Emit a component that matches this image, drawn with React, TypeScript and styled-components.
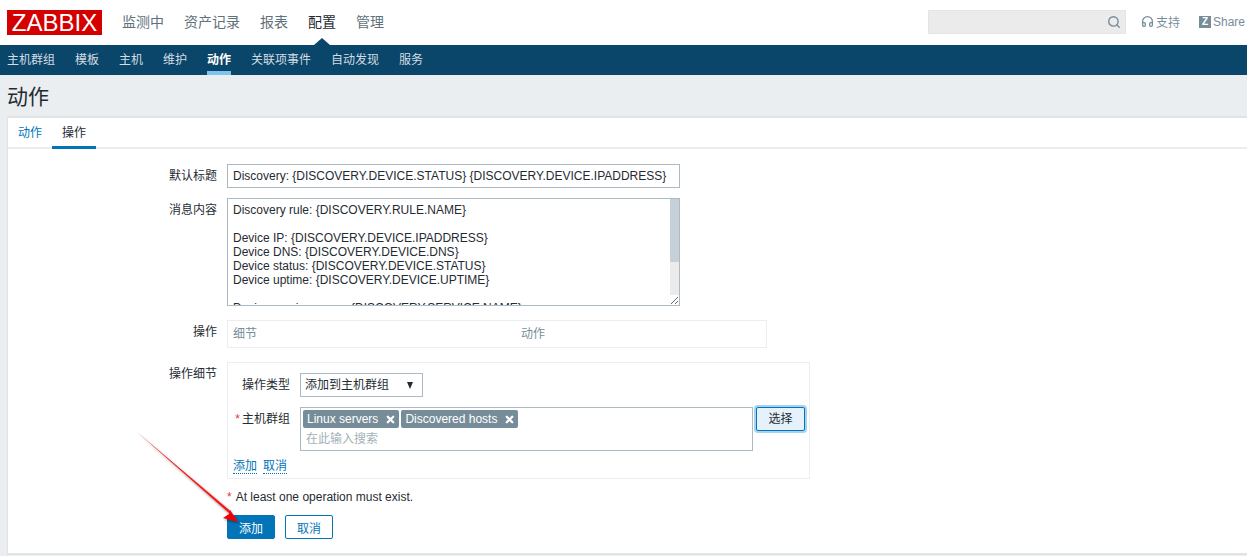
import { Headphones, Search, X } from 'lucide-react';
import styled, { createGlobalStyle } from 'styled-components';

const GlobalStyle = createGlobalStyle`
  html,
  body {
    margin: 0;
    height: 556px;
    overflow: hidden;
    background: #ebeef0;
    font-family: 'Liberation Sans', 'Noto Sans CJK SC', sans-serif;
    font-size: 12px;
    color: #1f2c33;
  }
`;

const Page = styled.div`
  position: relative;
  height: 556px;
`;

const TopBar = styled.header`
  display: flex;
  align-items: center;
  height: 45px;
  padding: 0 2px 0 7px;
  background: #fff;
  box-sizing: border-box;
`;

const Logo = styled.div`
  width: 95px;
  height: 25px;
  margin-right: 20px;
  background: #d40000;
  color: #fff;
  font-size: 24px;
  line-height: 25px;
  text-align: center;
`;

const TopMenu = styled.nav`
  display: flex;
  gap: 20px;
  flex: 1;
`;

const TopItem = styled.a<{ $active?: boolean }>`
  position: relative;
  font-size: 14px;
  line-height: 45px;
  color: ${(props) => (props.$active ? '#1f2c33' : '#5f717b')};

  ${(props) =>
    props.$active &&
    `
    &::after {
      content: '';
      position: absolute;
      left: 6px;
      bottom: 0;
      border-left: 8px solid transparent;
      border-right: 8px solid transparent;
      border-bottom: 7px solid #0a466a;
    }
  `}
`;

const RightTools = styled.div`
  display: flex;
  align-items: center;
  margin-bottom: 2px;
`;

const SearchBox = styled.div`
  display: flex;
  align-items: center;
  justify-content: flex-end;
  width: 198px;
  height: 24px;
  padding-right: 4px;
  margin-right: 15px;
  box-sizing: border-box;
  background: #ebebeb;
  border: 1px solid #e3e6e8;
  color: #768d99;
`;

const HelpLink = styled.a`
  display: flex;
  align-items: center;
  gap: 2px;
  color: #768d99;
  font-size: 12px;
`;

const ShareLink = styled(HelpLink)`
  margin-left: 19px;
`;

const ZMark = styled.span`
  width: 12px;
  height: 12px;
  background: #768d99;
  color: #fff;
  font-size: 10px;
  font-weight: bold;
  line-height: 12px;
  text-align: center;
`;

const SubNav = styled.nav`
  display: flex;
  gap: 20px;
  height: 30px;
  padding-left: 7px;
  background: #0a466a;
`;

const SubItem = styled.a<{ $active?: boolean }>`
  height: 30px;
  box-sizing: border-box;
  line-height: 30px;
  color: ${(props) => (props.$active ? '#fff' : '#d3dde2')};
  font-weight: ${(props) => (props.$active ? 'bold' : 'normal')};
  border-bottom: 4px solid ${(props) => (props.$active ? '#7cc3ef' : 'transparent')};
`;

const Title = styled.h1`
  margin: 0;
  height: 41px;
  padding-left: 7px;
  font-size: 21px;
  font-weight: normal;
  line-height: 44px;
  color: #1f2c33;
`;

const Card = styled.main`
  margin-left: 7px;
  height: 439px;
  box-sizing: border-box;
  background: #fff;
  border-top: 2px solid #dfe4e7;
  border-bottom: 2px solid #dfe4e7;
  border-left: 1px solid #dfe4e7;
`;

const Tabs = styled.div`
  display: flex;
  height: 29px;
  border-bottom: 2px solid #ebeef0;
`;

const Tab = styled.a<{ $active?: boolean }>`
  height: 31px;
  padding: 0 10px;
  box-sizing: border-box;
  line-height: 30px;
  color: ${(props) => (props.$active ? '#1f2c33' : '#0275b8')};
  border-bottom: 3px solid ${(props) => (props.$active ? '#0275b8' : 'transparent')};
`;

const Form = styled.form`
  display: flex;
  flex-direction: column;
  padding-top: 15px;
`;

const Row = styled.div<{ $gap: number }>`
  display: grid;
  grid-template-columns: 209px 1fr;
  column-gap: 10px;
  margin-bottom: ${(props) => props.$gap}px;
`;

const Label = styled.label`
  text-align: right;
  line-height: 24px;
  color: #1f2c33;
`;

const TextInput = styled.div`
  width: 453px;
  height: 24px;
  box-sizing: border-box;
  padding-left: 5px;
  border: 1px solid #acbbc3;
  line-height: 22px;
  white-space: nowrap;
`;

const MessageBox = styled.div`
  position: relative;
  width: 453px;
  height: 108px;
`;

const MessageArea = styled.textarea`
  display: block;
  width: 453px;
  height: 108px;
  box-sizing: border-box;
  padding: 4px 5px;
  border: 1px solid #acbbc3;
  border-radius: 0;
  outline: none;
  overflow: hidden;
  font: inherit;
  line-height: 14px;
  color: #1f2c33;
`;

/* headless chrome hides native scrollbars, so this one is drawn over the textarea */
const ScrollTrack = styled.div`
  position: absolute;
  top: 1px;
  right: 1px;
  bottom: 11px;
  width: 9px;
  background: #ebebeb;
`;

const ScrollThumb = styled.div`
  height: 63px;
  background: #c5d0d8;
`;

const OpsTable = styled.div`
  display: grid;
  grid-template-columns: 288px 1fr;
  width: 540px;
  height: 28px;
  box-sizing: border-box;
  padding-left: 5px;
  border: 1px solid #ebeef0;
  line-height: 27px;
  color: #768d99;
`;

const DetailBox = styled.div`
  width: 583px;
  height: 117px;
  box-sizing: border-box;
  padding: 10px 5px 0;
  border: 1px solid #ebeef0;
`;

const DetailRow = styled.div`
  display: grid;
  grid-template-columns: 57px 1fr;
  column-gap: 10px;
  margin-bottom: 10px;
`;

const DetailLabel = styled.span`
  height: 24px;
  text-align: right;
  line-height: 25px;
  white-space: nowrap;
`;

const Required = styled.span`
  color: #e33734;
  margin-right: 2px;
`;

const NoteMark = styled(Required)`
  margin-right: 4px;
`;

const Select = styled.div`
  display: flex;
  align-items: center;
  justify-content: space-between;
  width: 123px;
  height: 24px;
  box-sizing: border-box;
  padding: 0 9px 0 4px;
  border: 1px solid #acbbc3;
  line-height: 22px;
`;

const Caret = styled.span`
  border-left: 3.5px solid transparent;
  border-right: 3.5px solid transparent;
  border-top: 7px solid #1f2c33;
`;

const MultiLine = styled.div`
  display: flex;
  align-items: flex-start;
  gap: 3px;
`;

const MultiSelect = styled.div`
  width: 453px;
  height: 44px;
  box-sizing: border-box;
  padding: 2px;
  border: 1px solid #acbbc3;
`;

const TagList = styled.div`
  display: flex;
  gap: 2px;
`;

const Tag = styled.span`
  display: flex;
  align-items: center;
  gap: 7px;
  height: 18px;
  padding: 0 3px 0 4px;
  border-radius: 2px;
  background: #768d99;
  color: #fff;
  line-height: 18px;
`;

const Placeholder = styled.div`
  margin: 3px 0 0 3px;
  line-height: 17px;
  color: #a4b1b8;
`;

const PickButton = styled.button`
  width: 49px;
  height: 24px;
  padding: 0;
  border: 1px solid #0275b8;
  border-radius: 2px;
  background: #e5f2fb;
  box-shadow: 0 0 0 2px #a3d2f2;
  font: inherit;
  line-height: 22px;
  color: #1f2c33;
`;

const DetailLinks = styled.div`
  display: flex;
  gap: 6px;
  margin-top: -2px;
`;

const DottedLink = styled.a`
  color: #0275b8;
  line-height: 14px;
  border-bottom: 1px dotted #0275b8;
`;

const Note = styled.div`
  margin: -3px 0 0 219px;
  line-height: 14px;
  color: #1f2c33;
`;

const Actions = styled.div`
  display: flex;
  gap: 10px;
  margin: 11px 0 0 219px;
`;

const Button = styled.button<{ $primary?: boolean }>`
  width: 48px;
  height: 24px;
  padding: 0;
  border: 1px solid #0275b8;
  border-radius: 2px;
  background: ${(props) => (props.$primary ? '#0275b8' : '#fff')};
  color: ${(props) => (props.$primary ? '#fff' : '#0275b8')};
  font: inherit;
`;

const ArrowOverlay = styled.svg`
  position: absolute;
  left: 130px;
  top: 425px;
  pointer-events: none;
`;

const message = `Discovery rule: {DISCOVERY.RULE.NAME}

Device IP: {DISCOVERY.DEVICE.IPADDRESS}
Device DNS: {DISCOVERY.DEVICE.DNS}
Device status: {DISCOVERY.DEVICE.STATUS}
Device uptime: {DISCOVERY.DEVICE.UPTIME}

Device service name: {DISCOVERY.SERVICE.NAME}
Device service port: {DISCOVERY.SERVICE.PORT}
Device service status: {DISCOVERY.SERVICE.STATUS}
Device service uptime: {DISCOVERY.SERVICE.UPTIME}`;

const topItems = ['监测中', '资产记录', '报表', '配置', '管理'];
const subItems = ['主机群组', '模板', '主机', '维护', '动作', '关联项事件', '自动发现', '服务'];

export default function App() {
  return (
    <Page>
      <GlobalStyle />
      <TopBar>
        <Logo>ZABBIX</Logo>
        <TopMenu>
          {topItems.map((item) => (
            <TopItem key={item} $active={item === '配置'}>
              {item}
            </TopItem>
          ))}
        </TopMenu>
        <RightTools>
          <SearchBox>
            <Search size={14} strokeWidth={2.4} />
          </SearchBox>
          <HelpLink>
            <Headphones size={13} strokeWidth={2.4} />
            支持
          </HelpLink>
          <ShareLink>
            <ZMark>Z</ZMark>
            Share
          </ShareLink>
        </RightTools>
      </TopBar>
      <SubNav>
        {subItems.map((item) => (
          <SubItem key={item} $active={item === '动作'}>
            {item}
          </SubItem>
        ))}
      </SubNav>
      <Title>动作</Title>
      <Card>
        <Tabs>
          <Tab>动作</Tab>
          <Tab $active>操作</Tab>
        </Tabs>
        <Form>
          <Row $gap={10}>
            <Label>默认标题</Label>
            <TextInput>Discovery: {'{DISCOVERY.DEVICE.STATUS}'} {'{DISCOVERY.DEVICE.IPADDRESS}'}</TextInput>
          </Row>
          <Row $gap={14}>
            <Label>消息内容</Label>
            <MessageBox>
              <MessageArea readOnly value={message} />
              <ScrollTrack>
                <ScrollThumb />
              </ScrollTrack>
            </MessageBox>
          </Row>
          <Row $gap={14}>
            <Label>操作</Label>
            <OpsTable>
              <span>细节</span>
              <span>动作</span>
            </OpsTable>
          </Row>
          <Row $gap={14}>
            <Label>操作细节</Label>
            <DetailBox>
              <DetailRow>
                <DetailLabel>操作类型</DetailLabel>
                <Select>
                  添加到主机群组
                  <Caret />
                </Select>
              </DetailRow>
              <DetailRow>
                <DetailLabel>
                  <Required>*</Required>主机群组
                </DetailLabel>
                <MultiLine>
                  <MultiSelect>
                    <TagList>
                      <Tag>
                        Linux servers
                        <X size={11} strokeWidth={5} />
                      </Tag>
                      <Tag>
                        Discovered hosts
                        <X size={11} strokeWidth={5} />
                      </Tag>
                    </TagList>
                    <Placeholder>在此输入搜索</Placeholder>
                  </MultiSelect>
                  <PickButton type="button">选择</PickButton>
                </MultiLine>
              </DetailRow>
              <DetailLinks>
                <DottedLink>添加</DottedLink>
                <DottedLink>取消</DottedLink>
              </DetailLinks>
            </DetailBox>
          </Row>
          <Note>
            <NoteMark>*</NoteMark>At least one operation must exist.
          </Note>
          <Actions>
            <Button type="button" $primary>
              添加
            </Button>
            <Button type="button">取消</Button>
          </Actions>
        </Form>
      </Card>
      <ArrowOverlay width="120" height="110" viewBox="0 0 120 110">
        <defs>
          <filter id="arrow-shadow" x="-20%" y="-20%" width="140%" height="140%">
            <feDropShadow dx="1" dy="1.5" stdDeviation="1.2" floodColor="#000" floodOpacity="0.45" />
          </filter>
        </defs>
        <g filter="url(#arrow-shadow)">
          <path d="M7 7 L101 86.5 L99.5 88.5 Z" fill="#ee1c1c" />
          <path d="M108 97 L93 93 L99 89 L100 85 Z" fill="#f00000" />
        </g>
      </ArrowOverlay>
    </Page>
  );
}
